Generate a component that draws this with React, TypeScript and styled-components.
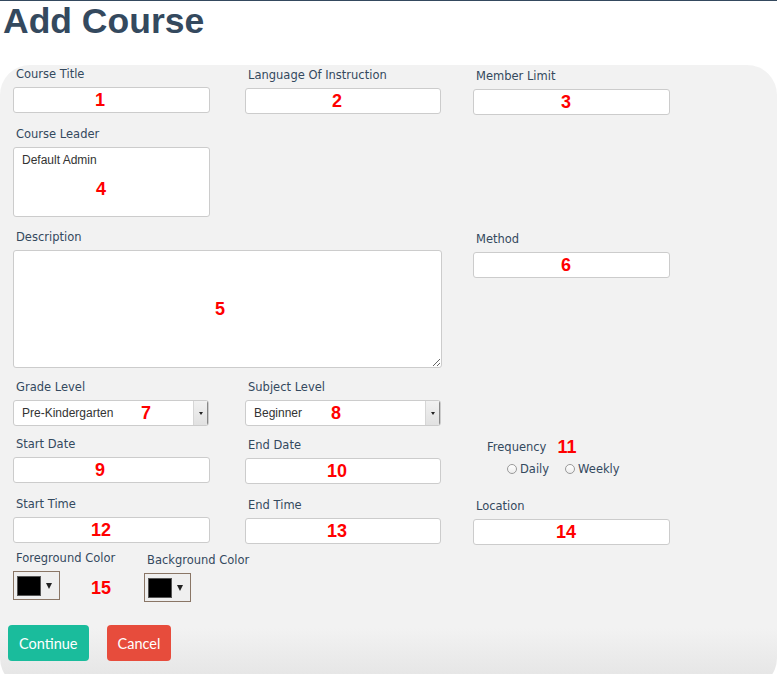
import React from "react";
import styled, { createGlobalStyle } from "styled-components";

const Global = createGlobalStyle`
  html, body { margin: 0; padding: 0; background: #ffffff; overflow: hidden; }
  body { font-family: "Liberation Sans", Arial, sans-serif; }
  * { box-sizing: border-box; }
`;

const Page = styled.div`
  border-top: 1px solid #34495e;
  height: 674px;
  display: flex;
  flex-direction: column;
`;

const Title = styled.h1`
  margin: 0 0 24px 0;
  padding-left: 3px;
  font-family: "Liberation Sans", Arial, sans-serif;
  font-weight: 700;
  font-size: 35.5px;
  line-height: 40px;
  color: #34495e;
`;

const Panel = styled.div`
  flex: 1;
  border-radius: 30px;
  background: linear-gradient(to bottom, #f2f2f2 0%, #f2f2f2 calc(100% - 60px), #e3e3e3 100%);
  padding: 2px 0 0 13px;
  margin-bottom: -14px;
`;

const Row = styled.div<{ $gap?: number }>`
  display: grid;
  grid-template-columns: 232px 228px 1fr;
  align-items: start;
  margin-top: ${(p) => p.$gap ?? 0}px;
`;

const Field = styled.div<{ $drop?: number; $span?: number; $indent?: number }>`
  display: flex;
  flex-direction: column;
  margin-top: ${(p) => p.$drop ?? 0}px;
  padding-left: ${(p) => p.$indent ?? 0}px;
  grid-column: span ${(p) => p.$span ?? 1};
`;

const Label = styled.label`
  display: flex;
  align-items: center;
  font-family: "DejaVu Sans", Verdana, sans-serif;
  font-size: 11.5px;
  line-height: 14px;
  color: #34495e;
  margin: 0 0 6px 3px;
`;

const Holder = styled.div<{ $w: number }>`
  position: relative;
  width: ${(p) => p.$w}px;
`;

const TextInput = styled.input`
  display: block;
  width: 100%;
  height: 26px;
  border: 1px solid #cccccc;
  border-radius: 3px;
  background: #ffffff;
  outline: none;
  font-family: "Liberation Sans", Arial, sans-serif;
  font-size: 12px;
`;

const LeaderBox = styled.div`
  height: 70px;
  border: 1px solid #cccccc;
  border-radius: 3px;
  background: #ffffff;
  padding: 5px 8px;
  font-family: "Liberation Sans", Arial, sans-serif;
  font-size: 12px;
  line-height: 14px;
  color: #333333;
`;

const Area = styled.textarea`
  display: block;
  width: 100%;
  height: 118px;
  border: 1px solid #cccccc;
  border-radius: 3px;
  background: #ffffff;
  outline: none;
  resize: both;
`;

const SelectBox = styled.div`
  display: flex;
  align-items: stretch;
  height: 26px;
  border: 1px solid #cccccc;
  border-radius: 3px;
  background: #ffffff;
  overflow: hidden;
`;

const SelectText = styled.span`
  flex: 1;
  display: flex;
  align-items: center;
  padding-left: 8px;
  font-family: "Liberation Sans", Arial, sans-serif;
  font-size: 12px;
  color: #333333;
`;

const SelectArrow = styled.span`
  width: 15px;
  display: flex;
  align-items: center;
  justify-content: center;
  background: linear-gradient(to bottom, #f1f1f1, #e1e1e1);
  border-left: 1px solid #d6d6d6;
  border-right: 1px solid #888;
  &::after {
    content: "";
    border-left: 2.5px solid transparent;
    border-right: 2.5px solid transparent;
    border-top: 3px solid #222;
  }
`;

const Num = styled.span<{ $x: number; $dy?: number }>`
  position: absolute;
  left: ${(p) => p.$x}px;
  top: 50%;
  transform: translate(-50%, calc(-50% + ${(p) => p.$dy ?? 0}px));
  font-family: "Liberation Sans", Arial, sans-serif;
  font-weight: 700;
  font-size: 18px;
  line-height: 20px;
  color: #ff0000;
  pointer-events: none;
`;

const InlineNum = styled.span`
  font-family: "Liberation Sans", Arial, sans-serif;
  font-weight: 700;
  font-size: 18px;
  line-height: 14px;
  color: #ff0000;
  margin-left: 11px;
`;

const Radios = styled.div`
  display: flex;
  align-items: center;
  gap: 16px;
  padding-left: 23px;
  margin-top: 2px;
`;

const RadioItem = styled.span`
  display: flex;
  align-items: center;
  gap: 3px;
  font-family: "DejaVu Sans", Verdana, sans-serif;
  font-size: 11.5px;
  color: #34495e;
`;

const RadioDot = styled.span`
  width: 10px;
  height: 10px;
  border-radius: 50%;
  border: 1px solid #999999;
  background: linear-gradient(to bottom, #ffffff, #ededed);
`;

const ColorRow = styled.div`
  display: flex;
  align-items: flex-start;
  margin-top: 6px;
`;

const ColorField = styled.div<{ $w?: number; $drop?: number }>`
  display: flex;
  flex-direction: column;
  width: ${(p) => (p.$w ? `${p.$w}px` : "auto")};
  margin-top: ${(p) => p.$drop ?? 0}px;
`;

const PickerLine = styled.div`
  position: relative;
  display: flex;
  align-items: center;
`;

const Picker = styled.div`
  width: 47px;
  height: 29px;
  border: 1px solid #8a7666;
  background: #efefef;
  display: flex;
  align-items: center;
  padding-left: 3px;
  gap: 5px;
`;

const Swatch = styled.span`
  width: 24px;
  height: 20px;
  background: #000000;
  border: 1px solid #555555;
`;

const Caret = styled.span`
  border-left: 3px solid transparent;
  border-right: 3px solid transparent;
  border-top: 6px solid #222;
`;

const Buttons = styled.div`
  display: flex;
  gap: 18px;
  margin: 23px 0 0 -5px;
`;

const Btn = styled.button<{ $bg: string }>`
  height: 36px;
  padding: 0 11px;
  border: none;
  border-radius: 4px;
  background: ${(p) => p.$bg};
  color: #ffffff;
  font-family: Lato, "Open Sans", sans-serif;
  font-size: 14.5px;
`;

const Select = ({ w, text, n, x }: { w: number; text: string; n: string; x: number }) => (
  <Holder $w={w}>
    <SelectBox>
      <SelectText>{text}</SelectText>
      <SelectArrow />
    </SelectBox>
    <Num $x={x}>{n}</Num>
  </Holder>
);

const Input = ({ w, n, x }: { w: number; n: string; x: number }) => (
  <Holder $w={w}>
    <TextInput />
    <Num $x={x}>{n}</Num>
  </Holder>
);

export default function App() {
  return (
    <>
      <Global />
      <Page>
        <Title>Add Course</Title>
        <Panel>
          <Row>
            <Field>
              <Label>Course Title</Label>
              <Input w={197} n="1" x={87} />
            </Field>
            <Field $drop={1}>
              <Label>Language Of Instruction</Label>
              <Input w={196} n="2" x={92} />
            </Field>
            <Field $drop={2}>
              <Label>Member Limit</Label>
              <Input w={197} n="3" x={93} />
            </Field>
          </Row>
          <Row $gap={12}>
            <Field>
              <Label>Course Leader</Label>
              <Holder $w={197}>
                <LeaderBox>Default Admin</LeaderBox>
                <Num $x={88} $dy={7}>4</Num>
              </Holder>
            </Field>
          </Row>
          <Row $gap={13}>
            <Field $span={2}>
              <Label>Description</Label>
              <Holder $w={429}>
                <Area />
                <Num $x={207}>5</Num>
              </Holder>
            </Field>
            <Field $drop={2}>
              <Label>Method</Label>
              <Input w={197} n="6" x={93} />
            </Field>
          </Row>
          <Row $gap={12}>
            <Field>
              <Label>Grade Level</Label>
              <Select w={196} text="Pre-Kindergarten" n="7" x={133} />
            </Field>
            <Field>
              <Label>Subject Level</Label>
              <Select w={196} text="Beginner" n="8" x={91} />
            </Field>
          </Row>
          <Row $gap={11}>
            <Field>
              <Label>Start Date</Label>
              <Input w={197} n="9" x={87} />
            </Field>
            <Field $drop={1}>
              <Label>End Date</Label>
              <Input w={196} n="10" x={92} />
            </Field>
            <Field $drop={3} $indent={11}>
              <Label>
                Frequency<InlineNum>11</InlineNum>
              </Label>
              <Radios>
                <RadioItem>
                  <RadioDot />
                  Daily
                </RadioItem>
                <RadioItem>
                  <RadioDot />
                  Weekly
                </RadioItem>
              </Radios>
            </Field>
          </Row>
          <Row $gap={13}>
            <Field>
              <Label>Start Time</Label>
              <Input w={197} n="12" x={88} />
            </Field>
            <Field $drop={1}>
              <Label>End Time</Label>
              <Input w={196} n="13" x={92} />
            </Field>
            <Field $drop={2}>
              <Label>Location</Label>
              <Input w={197} n="14" x={93} />
            </Field>
          </Row>
          <ColorRow>
            <ColorField $w={131}>
              <Label>Foreground Color</Label>
              <PickerLine>
                <Picker>
                  <Swatch />
                  <Caret />
                </Picker>
                <Num $x={88} $dy={2}>15</Num>
              </PickerLine>
            </ColorField>
            <ColorField $drop={2}>
              <Label>Background Color</Label>
              <PickerLine>
                <Picker>
                  <Swatch />
                  <Caret />
                </Picker>
              </PickerLine>
            </ColorField>
          </ColorRow>
          <Buttons>
            <Btn $bg="#1abc9c">Continue</Btn>
            <Btn $bg="#e74c3c">Cancel</Btn>
          </Buttons>
        </Panel>
      </Page>
    </>
  );
}
